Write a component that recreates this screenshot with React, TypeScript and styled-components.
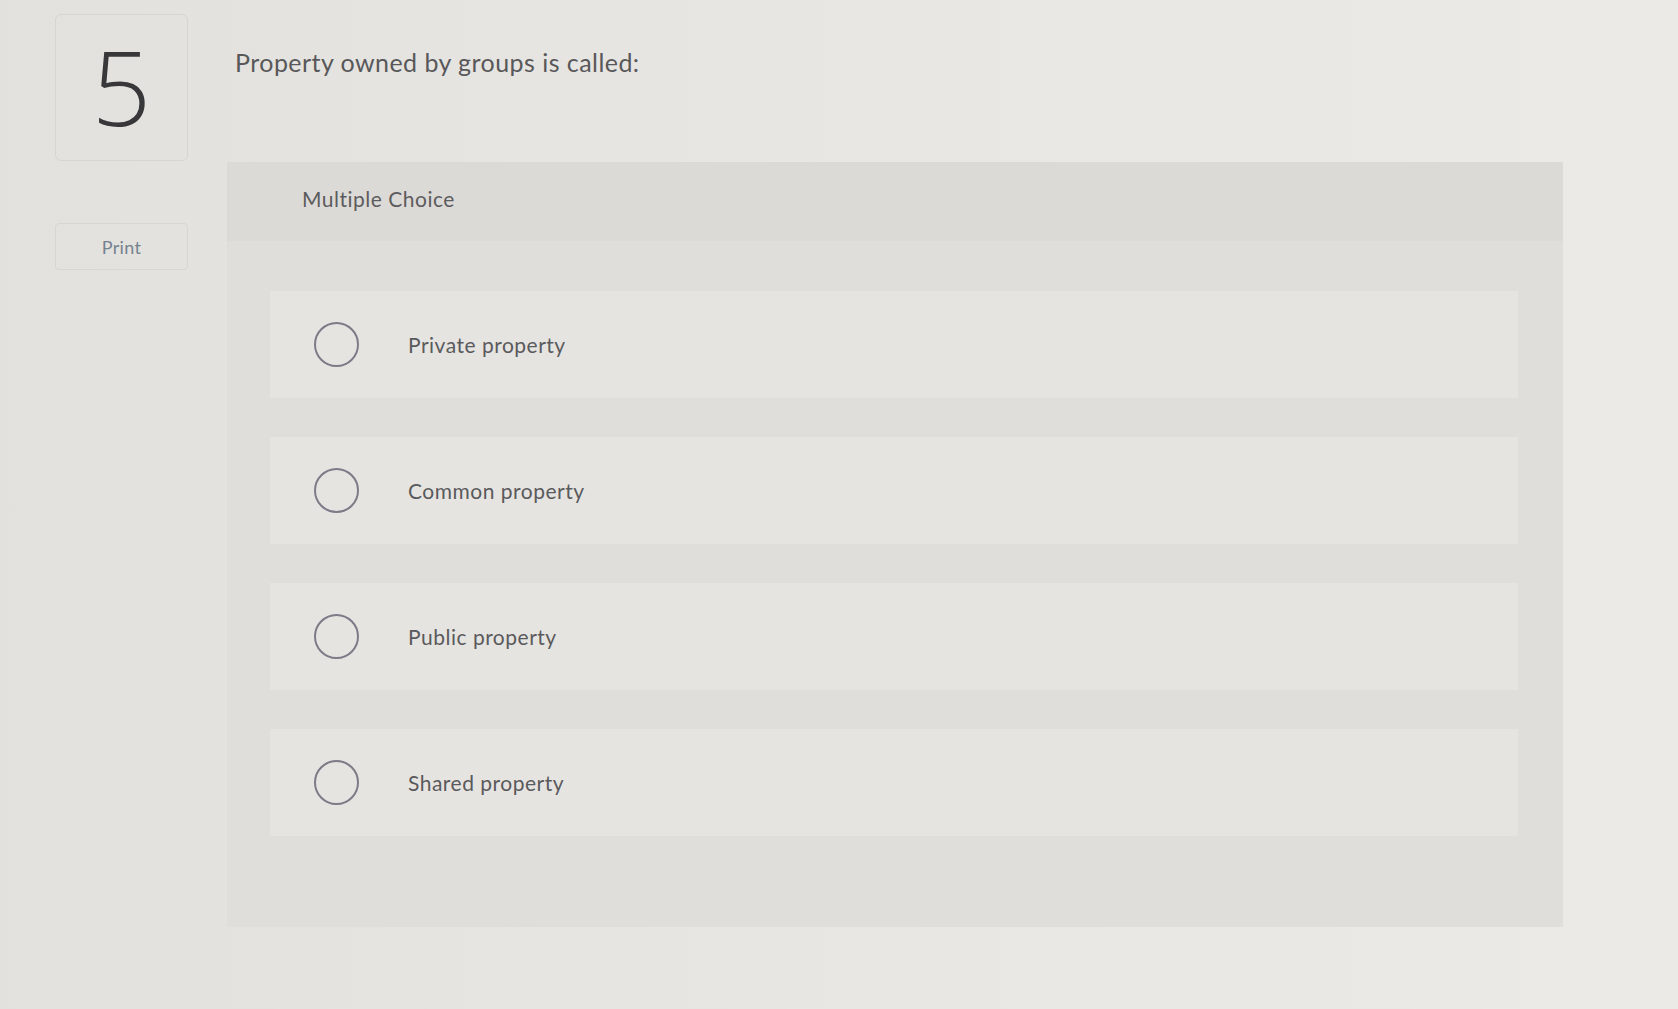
import styled, { createGlobalStyle } from "styled-components";

const GlobalStyle = createGlobalStyle`
  html, body {
    margin: 0;
    padding: 0;
  }
  body {
    background: linear-gradient(90deg, #e3e1dd 0%, #e8e6e2 45%, #eceae7 100%);
    font-family: "Lato", "Open Sans", "Liberation Sans", sans-serif;
    color: #555;
    min-height: 1009px;
  }
`;

const Page = styled.div`
  display: flex;
  align-items: flex-start;
  gap: 39px;
  padding: 14px 0 0 55px;
  width: 1678px;
  height: 1009px;
  box-sizing: border-box;
`;

const SideColumn = styled.div`
  display: flex;
  flex-direction: column;
  gap: 62px;
  width: 133px;
`;

const NumberBox = styled.div`
  height: 147px;
  border: 1px solid #d7d5d1;
  border-radius: 6px;
  display: flex;
  align-items: center;
  justify-content: center;
  box-sizing: border-box;
`;

const QuestionNumber = styled.span`
  font-family: "Open Sans", "Lato", sans-serif;
  font-size: 104px;
  font-weight: 300;
  color: #38383a;
  line-height: 1;
  margin-top: -4px;
`;

const PrintButton = styled.button`
  height: 47px;
  border: 1px solid #d8d6d2;
  border-radius: 4px;
  background: transparent;
  font-family: inherit;
  font-size: 18px;
  letter-spacing: 0.3px;
  color: #75828f;
  cursor: pointer;
`;

const MainColumn = styled.div`
  display: flex;
  flex-direction: column;
  width: 1336px;
`;

const Question = styled.div`
  height: 148px;
  padding: 33px 0 0 8px;
  box-sizing: border-box;
  font-size: 25px;
  letter-spacing: 0.45px;
  color: #58585a;
`;

const Panel = styled.div`
  background: #e0dedb;
  height: 765px;
  display: flex;
  flex-direction: column;
`;

const PanelHeader = styled.div`
  height: 79px;
  background: #dcdad6;
  display: flex;
  align-items: center;
  padding: 0 0 6px 75px;
  box-sizing: border-box;
  font-size: 21px;
  letter-spacing: 0.5px;
  color: #5c5c5e;
`;

const OptionList = styled.div`
  display: flex;
  flex-direction: column;
  gap: 39px;
  padding: 50px 45px 0 43px;
`;

const Option = styled.label`
  height: 107px;
  background: #e6e4e1;
  display: flex;
  align-items: center;
  padding-left: 44px;
  gap: 49px;
  font-size: 21px;
  letter-spacing: 0.5px;
  color: #5a5a5c;
  cursor: pointer;
`;

const Radio = styled.span`
  width: 45px;
  height: 45px;
  border: 2px solid #7d7b87;
  border-radius: 50%;
  box-sizing: border-box;
  flex-shrink: 0;
`;

const options = [
  "Private property",
  "Common property",
  "Public property",
  "Shared property",
];

function App() {
  return (
    <>
      <GlobalStyle />
      <Page>
        <SideColumn>
          <NumberBox>
            <QuestionNumber>5</QuestionNumber>
          </NumberBox>
          <PrintButton>Print</PrintButton>
        </SideColumn>

        <MainColumn>
          <Question>Property owned by groups is called:</Question>
          <Panel>
            <PanelHeader>Multiple Choice</PanelHeader>
            <OptionList>
              {options.map((text) => (
                <Option key={text}>
                  <Radio />
                  {text}
                </Option>
              ))}
            </OptionList>
          </Panel>
        </MainColumn>
      </Page>
    </>
  );
}

export default App;
